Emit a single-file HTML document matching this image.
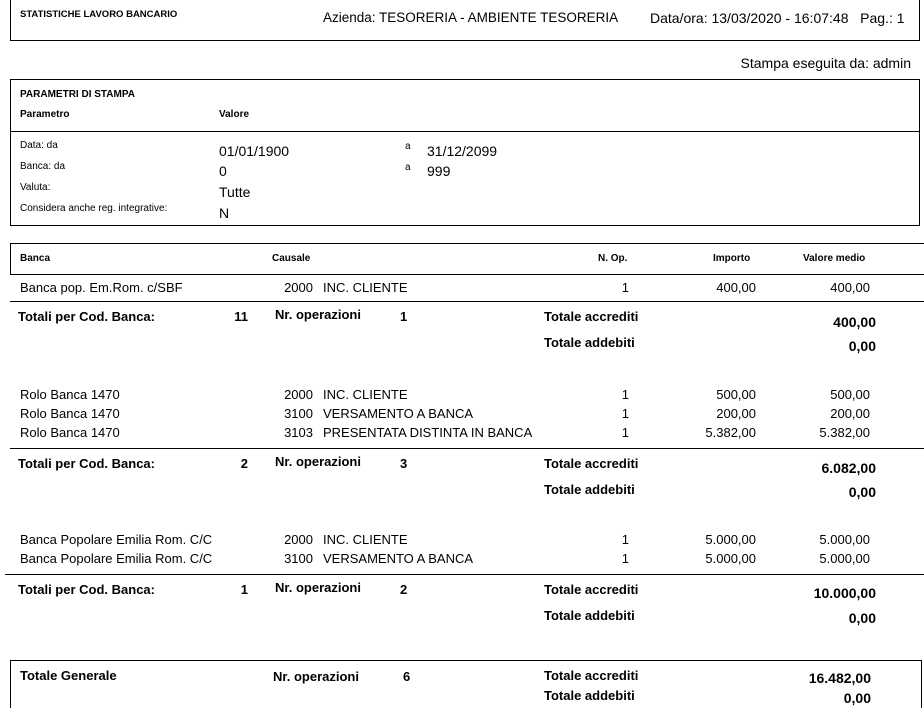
<!DOCTYPE html>
<html><head><meta charset="utf-8"><style>
html,body{margin:0;width:924px;height:708px;overflow:hidden}
body{background:#fff;position:relative;font-family:"Liberation Sans",sans-serif;color:#000}
div{position:absolute;white-space:nowrap}
.t{font-size:13px;line-height:16px}
.s{font-size:10px;line-height:12px}
.sb{font-size:10px;line-height:12px;font-weight:bold}
.b{font-size:13px;line-height:16px;font-weight:bold;font-family:"Liberation Sans Narrow","Liberation Sans",sans-serif}
.r{text-align:right}
.box{border:1px solid #000}
.hl{height:0;border-top:1px solid #000}
</style></head><body>
<div class="box" style="left:10px;top:-2px;width:908px;height:41px"></div>
<div class="sb" style="left:20px;top:9px;font-size:9.5px">STATISTICHE LAVORO BANCARIO</div>
<div class="t" style="left:323px;top:10px;font-size:13.5px">Azienda: TESORERIA - AMBIENTE TESORERIA</div>
<div class="t" style="left:650px;top:10px;font-size:14px">Data/ora: 13/03/2020 - 16:07:48&nbsp;&nbsp;&nbsp;Pag.: 1</div>
<div class="t r" style="right:13px;top:55px;font-size:14px">Stampa eseguita da: admin</div>

<div class="box" style="left:10px;top:79px;width:908px;height:145px"></div>
<div class="sb" style="left:20px;top:89px">PARAMETRI DI STAMPA</div>
<div class="sb" style="left:20px;top:109px">Parametro</div>
<div class="sb" style="left:219px;top:109px">Valore</div>
<div class="hl" style="left:10px;top:131px;width:909px"></div>
<div class="s" style="left:20px;top:140px">Data: da</div>
<div class="s" style="left:20px;top:161px">Banca: da</div>
<div class="s" style="left:20px;top:182px">Valuta:</div>
<div class="s" style="left:20px;top:203px">Considera anche reg. integrative:</div>
<div class="t" style="left:219px;top:143px;font-size:14px">01/01/1900</div>
<div class="t" style="left:219px;top:163px;font-size:14px">0</div>
<div class="t" style="left:219px;top:184px;font-size:14px">Tutte</div>
<div class="t" style="left:219px;top:205px;font-size:14px">N</div>
<div class="s" style="left:405px;top:141px">a</div>
<div class="s" style="left:405px;top:162px">a</div>
<div class="t" style="left:427px;top:143px;font-size:14px">31/12/2099</div>
<div class="t" style="left:427px;top:163px;font-size:14px">999</div>

<div class="box" style="left:10px;top:243px;width:920px;height:30px;border-right:none"></div>
<div class="sb" style="left:20px;top:253px">Banca</div>
<div class="sb" style="left:272px;top:253px">Causale</div>
<div class="sb" style="left:598px;top:253px">N. Op.</div>
<div class="sb" style="left:713px;top:253px">Importo</div>
<div class="sb" style="left:803px;top:253px">Valore medio</div>

<!-- group 1 -->
<div class="t" style="left:20px;top:280px">Banca pop. Em.Rom. c/SBF</div>
<div class="t r" style="left:250px;width:63px;top:280px">2000</div>
<div class="t" style="left:323px;top:280px">INC. CLIENTE</div>
<div class="t r" style="left:580px;width:49px;top:280px">1</div>
<div class="t r" style="left:650px;width:106px;top:280px">400,00</div>
<div class="t r" style="left:760px;width:110px;top:280px">400,00</div>
<div class="hl" style="left:10px;top:301px;width:914px"></div>
<div class="b" style="left:18px;top:309px">Totali per Cod. Banca:</div>
<div class="b r" style="left:200px;width:48px;top:309px">11</div>
<div class="b" style="left:275px;top:307px">Nr. operazioni</div>
<div class="b" style="left:400px;top:309px">1</div>
<div class="b" style="left:544px;top:309px">Totale accrediti</div>
<div class="b r" style="left:750px;width:126px;top:314px;font-size:14px">400,00</div>
<div class="b" style="left:544px;top:335px">Totale addebiti</div>
<div class="b r" style="left:750px;width:126px;top:338px;font-size:14px">0,00</div>

<!-- group 2 -->
<div class="t" style="left:20px;top:387px">Rolo Banca 1470</div>
<div class="t" style="left:20px;top:406px">Rolo Banca 1470</div>
<div class="t" style="left:20px;top:425px">Rolo Banca 1470</div>
<div class="t r" style="left:250px;width:63px;top:387px">2000</div>
<div class="t r" style="left:250px;width:63px;top:406px">3100</div>
<div class="t r" style="left:250px;width:63px;top:425px">3103</div>
<div class="t" style="left:323px;top:387px">INC. CLIENTE</div>
<div class="t" style="left:323px;top:406px">VERSAMENTO A BANCA</div>
<div class="t" style="left:323px;top:425px">PRESENTATA DISTINTA IN BANCA</div>
<div class="t r" style="left:580px;width:49px;top:387px">1</div>
<div class="t r" style="left:580px;width:49px;top:406px">1</div>
<div class="t r" style="left:580px;width:49px;top:425px">1</div>
<div class="t r" style="left:650px;width:106px;top:387px">500,00</div>
<div class="t r" style="left:650px;width:106px;top:406px">200,00</div>
<div class="t r" style="left:650px;width:106px;top:425px">5.382,00</div>
<div class="t r" style="left:760px;width:110px;top:387px">500,00</div>
<div class="t r" style="left:760px;width:110px;top:406px">200,00</div>
<div class="t r" style="left:760px;width:110px;top:425px">5.382,00</div>
<div class="hl" style="left:10px;top:448px;width:914px"></div>
<div class="b" style="left:18px;top:456px">Totali per Cod. Banca:</div>
<div class="b r" style="left:200px;width:48px;top:456px">2</div>
<div class="b" style="left:275px;top:454px">Nr. operazioni</div>
<div class="b" style="left:400px;top:456px">3</div>
<div class="b" style="left:544px;top:456px">Totale accrediti</div>
<div class="b r" style="left:750px;width:126px;top:460px;font-size:14px">6.082,00</div>
<div class="b" style="left:544px;top:482px">Totale addebiti</div>
<div class="b r" style="left:750px;width:126px;top:484px;font-size:14px">0,00</div>

<!-- group 3 -->
<div class="t" style="left:20px;top:532px">Banca Popolare Emilia Rom. C/C</div>
<div class="t" style="left:20px;top:551px">Banca Popolare Emilia Rom. C/C</div>
<div class="t r" style="left:250px;width:63px;top:532px">2000</div>
<div class="t r" style="left:250px;width:63px;top:551px">3100</div>
<div class="t" style="left:323px;top:532px">INC. CLIENTE</div>
<div class="t" style="left:323px;top:551px">VERSAMENTO A BANCA</div>
<div class="t r" style="left:580px;width:49px;top:532px">1</div>
<div class="t r" style="left:580px;width:49px;top:551px">1</div>
<div class="t r" style="left:650px;width:106px;top:532px">5.000,00</div>
<div class="t r" style="left:650px;width:106px;top:551px">5.000,00</div>
<div class="t r" style="left:760px;width:110px;top:532px">5.000,00</div>
<div class="t r" style="left:760px;width:110px;top:551px">5.000,00</div>
<div class="hl" style="left:5px;top:574px;width:919px"></div>
<div class="b" style="left:18px;top:582px">Totali per Cod. Banca:</div>
<div class="b r" style="left:200px;width:48px;top:582px">1</div>
<div class="b" style="left:275px;top:580px">Nr. operazioni</div>
<div class="b" style="left:400px;top:582px">2</div>
<div class="b" style="left:544px;top:582px">Totale accrediti</div>
<div class="b r" style="left:750px;width:126px;top:585px;font-size:14px">10.000,00</div>
<div class="b" style="left:544px;top:608px">Totale addebiti</div>
<div class="b r" style="left:750px;width:126px;top:610px;font-size:14px">0,00</div>

<!-- grand total -->
<div class="box" style="left:10px;top:660px;width:910px;height:50px"></div>
<div class="b" style="left:20px;top:668px">Totale Generale</div>
<div class="b" style="left:273px;top:669px">Nr. operazioni</div>
<div class="b" style="left:403px;top:669px">6</div>
<div class="b" style="left:544px;top:668px">Totale accrediti</div>
<div class="b r" style="left:750px;width:121px;top:670px;font-size:14px">16.482,00</div>
<div class="b" style="left:544px;top:688px">Totale addebiti</div>
<div class="b r" style="left:750px;width:121px;top:690px;font-size:14px">0,00</div>
</body></html>
